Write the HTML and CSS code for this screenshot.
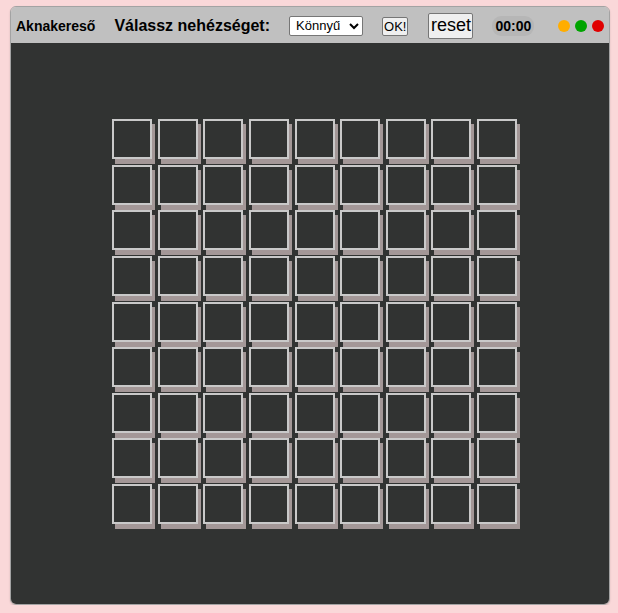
FILE: index.html
```html
<!DOCTYPE html>
<html lang="hu">
<head>
<meta charset="utf-8">
<title>Aknakereső</title>
<link rel="stylesheet" href="styles.css">
</head>
<body>
<div class="window">
  <div class="header">
    <span class="title">Aknakereső</span>
    <span class="label">Válassz nehézséget:</span>
    <select class="level"><option>Könnyű</option><option>Közepes</option><option>Nehéz</option></select>
    <button class="ok">OK!</button>
    <button class="reset">reset</button>
    <span class="timer">00:00</span>
    <span class="dots"><span class="dot orange"></span><span class="dot green"></span><span class="dot red"></span></span>
  </div>
  <div class="field">
    <div class="board">
      <div class="cell"></div><div class="cell"></div><div class="cell"></div><div class="cell"></div><div class="cell"></div><div class="cell"></div><div class="cell"></div><div class="cell"></div><div class="cell"></div>
      <div class="cell"></div><div class="cell"></div><div class="cell"></div><div class="cell"></div><div class="cell"></div><div class="cell"></div><div class="cell"></div><div class="cell"></div><div class="cell"></div>
      <div class="cell"></div><div class="cell"></div><div class="cell"></div><div class="cell"></div><div class="cell"></div><div class="cell"></div><div class="cell"></div><div class="cell"></div><div class="cell"></div>
      <div class="cell"></div><div class="cell"></div><div class="cell"></div><div class="cell"></div><div class="cell"></div><div class="cell"></div><div class="cell"></div><div class="cell"></div><div class="cell"></div>
      <div class="cell"></div><div class="cell"></div><div class="cell"></div><div class="cell"></div><div class="cell"></div><div class="cell"></div><div class="cell"></div><div class="cell"></div><div class="cell"></div>
      <div class="cell"></div><div class="cell"></div><div class="cell"></div><div class="cell"></div><div class="cell"></div><div class="cell"></div><div class="cell"></div><div class="cell"></div><div class="cell"></div>
      <div class="cell"></div><div class="cell"></div><div class="cell"></div><div class="cell"></div><div class="cell"></div><div class="cell"></div><div class="cell"></div><div class="cell"></div><div class="cell"></div>
      <div class="cell"></div><div class="cell"></div><div class="cell"></div><div class="cell"></div><div class="cell"></div><div class="cell"></div><div class="cell"></div><div class="cell"></div><div class="cell"></div>
      <div class="cell"></div><div class="cell"></div><div class="cell"></div><div class="cell"></div><div class="cell"></div><div class="cell"></div><div class="cell"></div><div class="cell"></div><div class="cell"></div>
    </div>
  </div>
</div>
</body>
</html>
```
FILE: styles.css
```css
html, body {
  margin: 0;
  padding: 0;
}
body {
  background: #fad8d9;
  font-family: "Liberation Sans", Arial, sans-serif;
  padding: 6px 0 0 10px;
}
.window {
  width: 598px;
  height: 597px;
  border: 1px solid #a3a3a3;
  border-radius: 6px;
  overflow: hidden;
  display: flex;
  flex-direction: column;
  box-shadow: 0 1px 2px rgba(0,0,0,0.15);
}
.header {
  height: 36px;
  background: #c0c0c0;
  display: flex;
  align-items: center;
  flex-shrink: 0;
}
.title {
  font-weight: bold;
  font-size: 14px;
  margin-left: 5px;
  margin-top: 2px;
  color: #000;
}
.label {
  font-weight: bold;
  font-size: 16px;
  margin-left: 19px;
  margin-top: 1px;
  color: #000;
}
.level {
  margin-left: 19px;
  font-family: "Liberation Sans", Arial, sans-serif;
  font-size: 13px;
  height: 20px;
  width: 74px;
  padding: 0 0 0 2px;
  margin-top: 1px;
  background: #fff;
  border: 1px solid #767676;
  border-radius: 2px;
  color: #000;
}
.ok {
  margin-left: 19px;
  font-family: "Liberation Sans", Arial, sans-serif;
  font-size: 13px;
  height: 19px;
  padding: 0 1px;
  margin-top: 2px;
  background: #efefef;
  border: 1px solid #767676;
  border-radius: 2px;
  color: #000;
}
.reset {
  margin-left: 20px;
  font-family: "Liberation Sans", Arial, sans-serif;
  font-size: 18px;
  height: 26px;
  width: 45px;
  padding: 0;
  margin-top: 1px;
  background: #efefef;
  border: 1px solid #767676;
  border-radius: 2px;
  color: #000;
}
.timer {
  margin-left: 19px;
  font-weight: bold;
  font-size: 14px;
  background: #b6b6b6;
  border-radius: 9px;
  padding: 2px 3px;
  margin-top: 2px;
  color: #000;
}
.dots {
  display: flex;
  gap: 5px;
  margin-left: 24px;
  margin-top: 2px;
}
.dot {
  width: 12px;
  height: 12px;
  border-radius: 50%;
}
.orange { background: #ffad00; }
.green { background: #00a400; }
.red { background: #e00000; }
.field {
  flex: 1;
  background: #313332;
  padding: 76px 0 0 101px;
}
.board {
  display: grid;
  grid-template-columns: repeat(9, 40px);
  grid-auto-rows: 40px;
  gap: 5.625px;
}
.cell {
  box-sizing: border-box;
  border: 2px solid #c9c9c9;
  background: #313332;
  box-shadow: 3px 5px 0 #a39797;
}
```
